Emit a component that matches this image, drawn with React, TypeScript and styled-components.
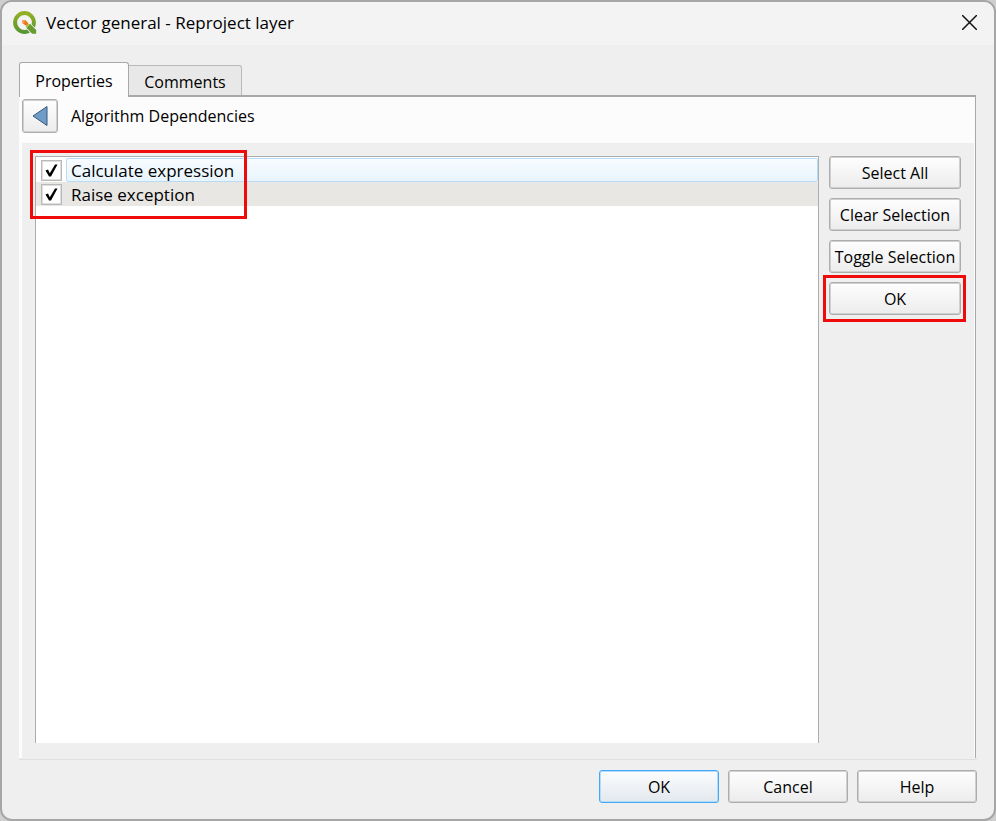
import React, { useState } from "react";
import styled, { createGlobalStyle, css } from "styled-components";

const GlobalStyle = createGlobalStyle`
  * { box-sizing: border-box; }
  body {
    margin: 0;
    background: #cfcfcf;
    color: #000;
    font-family: "Open Sans", "Noto Sans", sans-serif;
    font-size: 16px;
    line-height: 20px;
  }
  button, input { font: inherit; color: inherit; }
`;

const Dialog = styled.div`
  display: flex;
  flex-direction: column;
  min-height: 100vh;
  overflow: hidden;
  border: 2px solid #a6a6a6;
  border-radius: 12px;
  background: #efefef;
`;

const TitleBar = styled.header`
  display: flex;
  align-items: center;
  height: 43px;
  padding: 0 17px 2px 11px;
  background: #f3f3f3;
`;

const Title = styled.h1`
  flex: 1;
  margin: 0 0 0 9px;
  font-size: 17px;
  font-weight: 400;
  line-height: 24px;
`;

const CloseButton = styled.button`
  display: flex;
  padding: 0;
  border: 0;
  background: none;
`;

const Content = styled.main`
  display: flex;
  flex: 1;
  flex-direction: column;
  padding: 17px 18px 0 17px;
`;

const TabList = styled.div`
  display: flex;
  align-items: flex-end;
  height: 33px;
`;

const Tab = styled.button<{ $active?: boolean }>`
  position: relative;
  height: 30px;
  width: 113px;
  padding: 3px 0 0;
  border: 1px solid #b9b9b9;
  border-left: 0;
  border-bottom: 0;
  border-radius: 0 3px 0 0;
  background: #e8e8e8;
  ${(p) =>
    p.$active &&
    css`
      z-index: 1;
      height: 35px;
      width: 110px;
      margin-bottom: -2px;
      padding: 2px 0 0;
      border: 1px solid #a8a8a8;
      border-bottom: 0;
      border-radius: 3px 3px 0 0;
      background: #fcfcfc;
    `}
`;

const TabPage = styled.section`
  display: flex;
  flex: 1;
  flex-direction: column;
  padding: 0 1px 0 3px;
  border-top: 2px solid #a8a8a8;
  border-right: 1px solid #a8a8a8;
  background: #fcfcfc;
`;

const PageHeader = styled.div`
  display: flex;
  align-items: center;
  height: 46px;
  padding-bottom: 8px;
`;

const PageTitle = styled.h2`
  margin: 0 0 0 13px;
  font-size: 16px;
  font-weight: 400;
`;

const buttonFace = css`
  border: 1px solid #adadad;
  border-radius: 3px;
  background: linear-gradient(#fefefe, #ececec);
  box-shadow: inset 0 0 0 1px #d0d0d0;
`;

const BackButton = styled.button`
  ${buttonFace}
  display: grid;
  place-items: center;
  width: 36px;
  height: 34px;
  padding: 0;
`;

const Panel = styled.div`
  display: flex;
  flex: 1;
  gap: 10px;
  padding: 13px 13px 15px;
  background: #efefef;
`;

const ListBox = styled.div`
  position: relative;
  flex: 1;
  border: 1px solid #adadad;
  border-bottom: 0;
  background: #fff;
`;

const List = styled.ul`
  margin: 0;
  padding: 1px 0 0;
  list-style: none;
`;

const Row = styled.li<{ $shaded?: boolean }>`
  background: ${(p) => (p.$shaded ? "#e9e7e3" : "#fff")};
`;

const RowLabel = styled.label`
  display: flex;
  align-items: center;
  height: 24px;
  padding-left: 5px;
`;

const CheckFrame = styled.span`
  display: grid;
  width: 21px;
  height: 21px;
  border: 1px solid #b9b9b9;
  background: #fff;
  box-shadow: inset 0 0 0 1px #dedede;

  > * { grid-area: 1 / 1; place-self: center; }
  input { appearance: none; width: 19px; height: 19px; margin: 0; }
  svg { pointer-events: none; visibility: hidden; }
  input:checked + svg { visibility: visible; }
`;

const RowText = styled.span<{ $current?: boolean }>`
  flex: 1;
  height: 24px;
  margin-left: 4px;
  padding-left: 4px;
  border: 1px solid transparent;
  font-size: 17px;
  line-height: 23px;
  ${(p) =>
    p.$current &&
    css`
      border-color: #b8dcf5;
      border-radius: 2px;
      background: linear-gradient(#f8fcff, #e8f4fd);
    `}
`;

const Actions = styled.div`
  display: flex;
  flex-direction: column;
  gap: 9px;
  width: 132px;
`;

const PushButton = styled.button<{ $primary?: boolean }>`
  ${buttonFace}
  height: 33px;
  padding: 1px 0 0;
  white-space: nowrap;
  ${(p) =>
    p.$primary &&
    css`
      border-color: #45a8f5;
      background: linear-gradient(#fcfdfe, #e2e8ed);
      box-shadow: inset 0 0 0 1px #b3dbfa;
    `}
`;

const Highlighted = styled.div`
  position: relative;
  display: grid;
`;

const RowsMarker = styled.div`
  position: absolute;
  top: -7px;
  left: -6px;
  width: 217px;
  height: 69px;
  border: 3px solid #f00b0b;
  pointer-events: none;
`;

const ButtonMarker = styled.div`
  position: absolute;
  inset: -7px -5px -7px -6px;
  border: 3px solid #f00b0b;
  pointer-events: none;
`;

const Footer = styled.footer`
  display: grid;
  grid-template-columns: repeat(3, 120px);
  justify-content: end;
  gap: 9px;
  margin: 1px -1px 0 0;
  padding: 10px 0 16px;
  border-top: 1px solid #dfdfdf;
`;

const Logo = () => (
  <svg width="24" height="24" viewBox="0 0 24 24" aria-hidden="true">
    <defs>
      <linearGradient id="ring" x1="0" y1="0" x2="0" y2="1">
        <stop offset="0" stopColor="#93b023" />
        <stop offset="1" stopColor="#589632" />
      </linearGradient>
    </defs>
    <circle cx="11.5" cy="11.5" r="9.4" fill="none" stroke="url(#ring)" strokeWidth="4" />
    <path d="M13 12.2h4.5l6.500 6.500v5h-5L13 17.500z" fill="#f3f3f3" />
    <path d="M13.500 13h3.700l6 6v3.700h-4L13.500 17z" fill="#6a9b31" />
    <path d="M13.500 17v-4h3.700z" fill="#b3c94a" />
    <path d="M9.500 9.200h3.200l2.800 3.200-2.500 2.400-3.500-2.600z" fill="#ee7913" />
    <path d="M9.500 9.200h2.600l-1.300 3.900-1.300-.9z" fill="#f39a4c" />
  </svg>
);

const CheckMark = () => (
  <svg width="15" height="15" viewBox="0 0 15 15" aria-hidden="true">
    <path d="M1.500 7.500L4 6.500 5.800 10.200 11 1.500H13.500L7 13.500H5z" fill="#000" />
  </svg>
);

const steps = ["Calculate expression", "Raise exception"];

export default function App() {
  const [checked, setChecked] = useState([true, true]);
  return (
    <>
      <GlobalStyle />
      <Dialog role="dialog" aria-labelledby="dialog-title">
        <TitleBar>
          <Logo />
          <Title id="dialog-title">Vector general - Reproject layer</Title>
          <CloseButton aria-label="Close">
            <svg width="15" height="15" viewBox="0 0 15 15" aria-hidden="true">
              <path d="M0 0L15 15M15 0L0 15" stroke="#111" strokeWidth="1.500" />
            </svg>
          </CloseButton>
        </TitleBar>
        <Content>
          <TabList role="tablist">
            <Tab $active role="tab" aria-selected="true">Properties</Tab>
            <Tab role="tab" aria-selected="false">Comments</Tab>
          </TabList>
          <TabPage>
            <PageHeader>
              <BackButton aria-label="Back">
                <svg width="18" height="22" viewBox="0 0 18 22" aria-hidden="true">
                  <path d="M16 1.500v19L2 11z" fill="#6f9bc9" stroke="#36597c" strokeLinejoin="round" />
                </svg>
              </BackButton>
              <PageTitle>Algorithm Dependencies</PageTitle>
            </PageHeader>
            <Panel>
              <ListBox>
                <List>
                  {steps.map((step, i) => (
                    <Row key={step} $shaded={i % 2 === 1}>
                      <RowLabel>
                        <CheckFrame>
                          <input
                            type="checkbox"
                            checked={checked[i]}
                            onChange={() => setChecked(checked.map((c, j) => (j === i ? !c : c)))}
                          />
                          <CheckMark />
                        </CheckFrame>
                        <RowText $current={i === 0}>{step}</RowText>
                      </RowLabel>
                    </Row>
                  ))}
                </List>
                <RowsMarker />
              </ListBox>
              <Actions>
                <PushButton onClick={() => setChecked([true, true])}>Select All</PushButton>
                <PushButton onClick={() => setChecked([false, false])}>Clear Selection</PushButton>
                <PushButton onClick={() => setChecked(checked.map((c) => !c))}>Toggle Selection</PushButton>
                <Highlighted>
                  <PushButton>OK</PushButton>
                  <ButtonMarker />
                </Highlighted>
              </Actions>
            </Panel>
          </TabPage>
          <Footer>
            <PushButton $primary>OK</PushButton>
            <PushButton>Cancel</PushButton>
            <PushButton>Help</PushButton>
          </Footer>
        </Content>
      </Dialog>
    </>
  );
}
